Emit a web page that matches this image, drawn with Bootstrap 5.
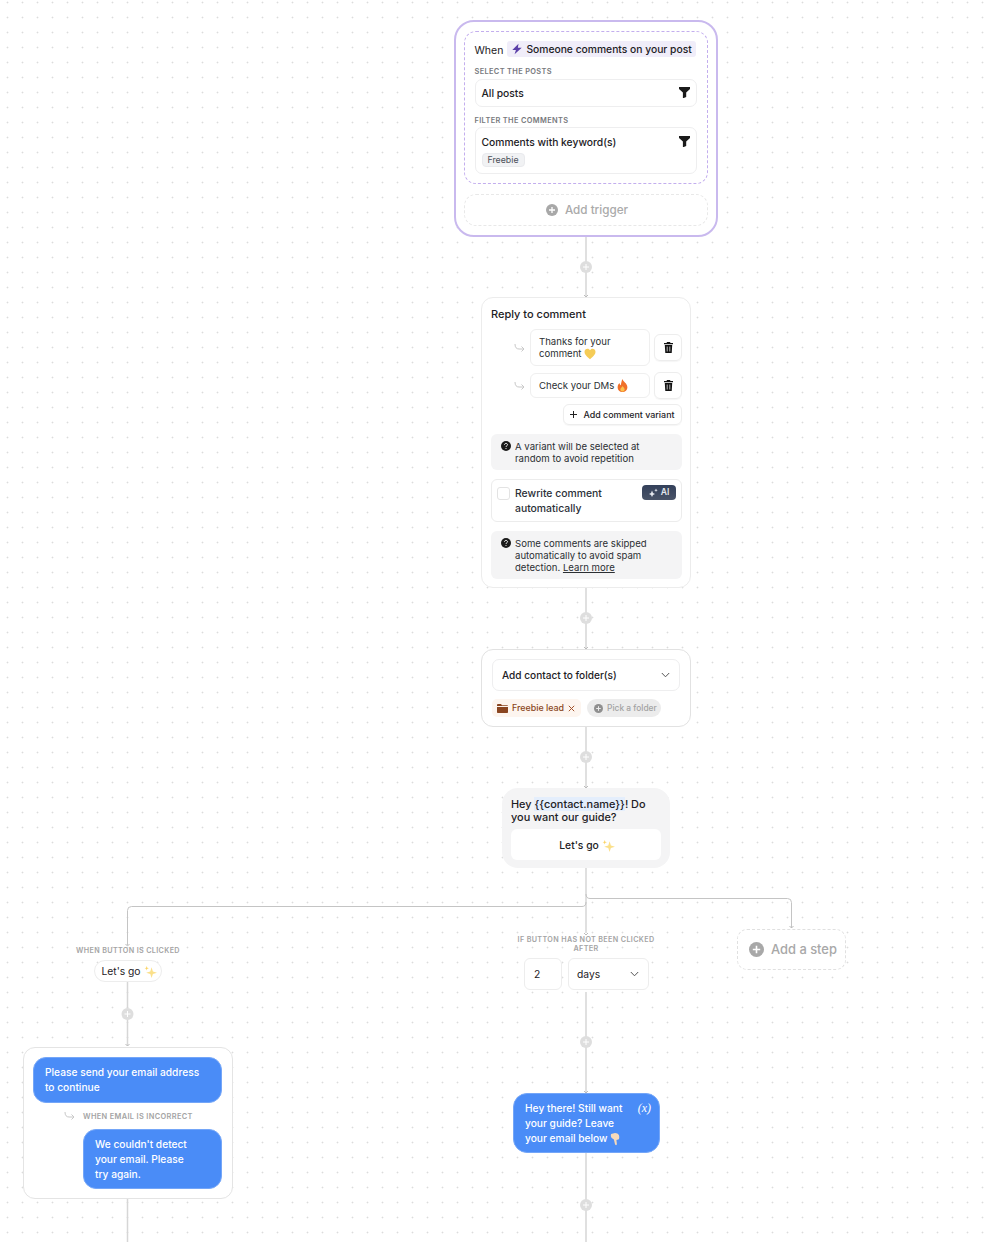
<!DOCTYPE html>
<html lang="en">
<head>
    <meta charset="UTF-8">
    <meta name="viewport" content="width=device-width, initial-scale=1">
    <title>Automation flow</title>
    <link href="https://cdn.jsdelivr.net/npm/bootstrap@5.3.2/dist/css/bootstrap.min.css" rel="stylesheet">
    <script defer src="https://cdn.jsdelivr.net/npm/bootstrap@5.3.2/dist/js/bootstrap.bundle.min.js"></script>
    <style>
        html, body { margin: 0; height: 100%; overflow: hidden; background: #fff; }
        body { font-family: Inter, "Liberation Sans", sans-serif; color: #1d2125; font-size: 10.5px; line-height: 12px; }
        svg { display: block; flex: none; }
        .inline-emoji { display: inline-block; vertical-align: middle; margin: -3px 0; }
        .flow-canvas {
            position: relative; width: 986px; height: 1242px; overflow: hidden;
            background-image: radial-gradient(circle at 7.5px 2.5px, #dcdcdc 0, #dcdcdc .8px, transparent 1.1px);
            background-size: 15px 15px;
        }
        .flow-lines { position: absolute; left: 0; top: 0; }
        .node { position: absolute; background: #fff; }

        .node-trigger { left: 454px; top: 20px; width: 264px; height: 217px; border: 2px solid #c9b9ee; border-radius: 20px; padding: 9px 8px; }
        .when-box { height: 153px; border: 1.5px dashed #c3aeee; border-radius: 12px; padding: 9px 10.500px 0 9.500px; }
        .when-text { font-size: 10.5px; padding-top: 3px; }
        .when-event { background: #f0edf9; border-radius: 3px; padding: 0 4px 1px; height: 16px; font-size: 10.3px; font-weight: 500; margin-left: 4px; gap: 3px; }
        .mini-label { font-size: 7.4px; font-weight: 600; letter-spacing: .35px; color: #77797d; line-height: 9px; }
        .label-posts { margin-top: 10px; }
        .label-comments { margin-top: 9px; }
        .select-box { border: 1px solid #eeeeef; border-radius: 7px; background: #fff; }
        .posts-box { height: 28px; padding: 0 6px; margin-top: 3px; }
        .comments-box { height: 47px; padding: 8px 6px 0; margin-top: 2px; }
        .box-text { font-size: 10.3px; font-weight: 500; }
        .funnel-up { margin-bottom: 2px; }
        .tag-grey { display: inline-block; background: #f1f2f4; border: 1px solid #e9eaed; border-radius: 4px; color: #4b5058; font-size: 8.8px; line-height: 12px; padding: 0 5px; margin-top: 5px; }
        .add-trigger { height: 32px; margin-top: 10px; border: 1.5px dashed #e8e8e8; border-radius: 12px; color: #aaa; font-size: 11.7px; font-weight: 500; gap: 7px; padding-left: 2px; }

        .node-reply { left: 481px; top: 297px; width: 210px; height: 291px; border: 1px solid #ececec; border-radius: 12px; padding: 10px 8px 0 9px; }
        .reply-title { font-size: 11px; font-weight: 500; line-height: 13px; margin-bottom: 8px; }
        .variant-row { padding-left: 23px; }
        .variant-row + .variant-row { margin-top: 6px; }
        .variant-box { width: 120px; border: 1px solid #efefef; border-radius: 6px; padding: 6px 8px 5px; font-size: 9.6px; line-height: 12px; color: #2b2f33; margin-left: 5px; }
        .variant-short { padding: 5.500px 8px; gap: 3px; }
        .trash-btn { width: 28px; height: 27px; border: 1px solid #ededed; border-radius: 6px; margin-left: 4px; box-shadow: 0 1px 1px #0000000a; }
        .add-variant { width: 119px; height: 21px; border: 1px solid #ededed; border-radius: 6px; font-size: 8.9px; font-weight: 500; gap: 6px; margin-top: 5px; box-shadow: 0 1px 1px #0000000a; }
        .info-box { background: #f4f4f5; border-radius: 6px; padding: 7px 8px 0 10px; font-size: 9.6px; line-height: 12px; color: #2b2f33; gap: 4px; }
        .info-a { height: 36px; margin-top: 9px; }
        .info-b { height: 48px; margin-top: 9px; }
        .info-box a { color: inherit; }
        .rewrite-box { height: 43px; margin-top: 9px; border: 1px solid #ececec; border-radius: 6px; padding: 6px 5px 0 5px; font-size: 10.4px; font-weight: 500; line-height: 15px; color: #2b3038; }
        .check-fake { width: 13px; height: 13px; border: 1px solid #e3e3e3; border-radius: 3px; margin: 1px 5px 0 0; flex: none; }
        .ai-badge { flex: none; width: 34px; height: 15px; background: linear-gradient(#33405a, #4a5468); color: #e6e8ee; font-size: 8.6px; font-weight: 600; border-radius: 4px; gap: 3px; margin-left: auto; margin-top: -1px; }

        .node-folder { left: 481px; top: 649px; width: 210px; height: 78px; border: 1px solid #e2e2e2; border-radius: 12px; padding: 9px 10px; }
        .folder-select { height: 32px; padding: 0 9px; }
        .folder-select .box-text { font-size: 10.1px; }
        .folder-tag { background: #fdf5ef; color: #8a4520; height: 18px; border-radius: 5px; padding: 0 6px 0 5px; font-size: 8.9px; font-weight: 500; gap: 4px; }
        .folder-pick { background: #ececec; color: #a2a2a2; height: 18px; border-radius: 9px; padding: 0 4px 0 7px; font-size: 8.4px; font-weight: 500; gap: 4px; margin-left: 6px; }

        .node-question { left: 502px; top: 788px; width: 168px; height: 80px; background: #f4f4f5; border-radius: 16px; padding: 10px 9px 0; font-size: 10.9px; line-height: 13px; font-weight: 500; }
        .var-mark { background: #e4eefc; }
        .question-btn { height: 31px; margin-top: 5px; background: #fff; border-radius: 6px; gap: 3px; font-size: 10.3px; padding: 1px 0 0 2px; }

        .node-pill { left: 94px; top: 960px; width: 68px; height: 22px; border: 1px solid #ededed; border-radius: 11px; font-size: 10.3px; gap: 3px; padding-left: 2px; }
        .caption { position: absolute; text-align: center; font-size: 7.2px; line-height: 9px; font-weight: 600; letter-spacing: .35px; color: #a4a4a4; }
        .cap-left { left: 48px; top: 946px; width: 160px; }
        .cap-right { left: 506px; top: 935px; width: 160px; }
        .node-num { left: 524px; top: 958px; width: 38px; height: 32px; border: 1px solid #ededed; border-radius: 6px; padding-left: 9px; font-size: 10.3px; }
        .node-days { left: 568px; top: 958px; width: 81px; height: 32px; border: 1px solid #ededed; border-radius: 6px; padding: 0 9px 0 8px; font-size: 10.3px; }
        .node-addstep { left: 737px; top: 929px; width: 109px; height: 41px; border: 1px dashed #e0e0e0; border-radius: 10px; color: #a8a8a8; font-size: 12.9px; font-weight: 500; gap: 7px; padding-left: 11px; }

        .node-email { left: 23px; top: 1047px; width: 210px; height: 152px; border: 1px solid #e4e4e4; border-radius: 12px; padding: 9px 10px 0 9px; }
        .blue-bubble { background: #4a8cf7; color: #fff; border: 1px solid #74a6f8; font-size: 10.2px; font-weight: 500; line-height: 15px; }
        .bubble-one { height: 46px; border-radius: 13px; padding: 7px 11px; }
        .bubble-two { width: 139px; height: 60px; border-radius: 13px; padding: 7px 28px 7px 11px; margin-left: auto; }
        .incorrect-row { height: 26px; padding-left: 31px; gap: 8px; }
        .incorrect-row .mini-label { color: #a4a4a4; }
        .node-still { left: 513px; top: 1093px; width: 147px; height: 60px; border-radius: 14px; padding: 7px 25px 7px 11px; background: #4a8cf7; }
        .var-x { position: absolute; right: 8px; top: 7px; font-family: "Liberation Serif", serif; font-style: italic; font-size: 12px; font-weight: 400; }
    </style>
</head>
<body>
<div class="flow-canvas">
    <!-- линии между шагами -->
    <svg class="flow-lines" width="986" height="1242" fill="none" stroke="#d6d6d6" stroke-width="1">
        <g stroke-width="1.5">
            <path d="M586 237V297M586 588V649M586 727V788M586 868V933M586 992V1093M586 1153V1242"/>
            <path d="M127.500 982V1046M127.500 1199V1242"/>
        </g>
        <path d="M586 902q0 4.500 -4 4.500H131.500q-4 0 -4 4V945" stroke="#c4c4c4"/>
        <path d="M586 894q0 4.500 4 4.500H787.500q4 0 4 4V928" stroke="#c4c4c4"/>
        <g stroke="#bcbcbc">
            <path d="M584 295l2 2 2-2M584 647l2 2 2-2M584 786l2 2 2-2M584 933l2 2 2-2M584 1091l2 2 2-2M125.500 944l2 2 2-2M125.500 1044l2 2 2-2M789.500 926l2 2 2-2"/>
        </g>
        <g>
            <circle cx="586" cy="267" r="6" fill="#dedede" stroke="none"/><path d="M586 264v6M583 267h6" stroke="#fff"/>
            <circle cx="586" cy="618" r="6" fill="#dedede" stroke="none"/><path d="M586 615v6M583 618h6" stroke="#fff"/>
            <circle cx="586" cy="757" r="6" fill="#dedede" stroke="none"/><path d="M586 754v6M583 757h6" stroke="#fff"/>
            <circle cx="586" cy="1042" r="6" fill="#dedede" stroke="none"/><path d="M586 1039v6M583 1042h6" stroke="#fff"/>
            <circle cx="586" cy="1205" r="6" fill="#dedede" stroke="none"/><path d="M586 1202v6M583 1205h6" stroke="#fff"/>
            <circle cx="127.500" cy="1014" r="6" fill="#dedede" stroke="none"/><path d="M127.500 1011v6M124.500 1014h6" stroke="#fff"/>
        </g>
    </svg>

    <!-- Триггер -->
    <div class="node node-trigger">
        <div class="when-box">
            <div class="d-flex align-items-center">
                <span class="when-text">When</span>
                <span class="when-event d-flex align-items-center">
                    <svg width="12" height="12" viewBox="0 0 12 12"><path d="M7.500 .8 1.300 7h3.600L3.600 11.200 10.700 4.800H6.900z" fill="#5b3fa8"/></svg>
                    Someone comments on your post
                </span>
            </div>
            <div class="mini-label label-posts">SELECT THE POSTS</div>
            <div class="select-box posts-box d-flex align-items-center justify-content-between">
                <span class="box-text">All posts</span>
                <svg class="funnel-up" width="11" height="11" viewBox="0 0 11 11"><path d="M0 0h11v2L7.200 5.500V10L4.800 11H3.900V5.500L0 2z" fill="#1b1b1b"/></svg>
            </div>
            <div class="mini-label label-comments">FILTER THE COMMENTS</div>
            <div class="select-box comments-box">
                <div class="d-flex justify-content-between">
                    <span class="box-text">Comments with keyword(s)</span>
                    <svg width="11" height="11" viewBox="0 0 11 11"><path d="M0 0h11v2L7.200 5.500V10L4.800 11H3.900V5.500L0 2z" fill="#1b1b1b"/></svg>
                </div>
                <span class="tag-grey">Freebie</span>
            </div>
        </div>
        <div class="add-trigger d-flex align-items-center justify-content-center">
            <svg width="12" height="12" viewBox="0 0 12 12"><circle cx="6" cy="6" r="6" fill="#a8a8a8"/><path d="M6 3v6M3 6h6" stroke="#fff" stroke-width="1.300"/></svg>
            Add trigger
        </div>
    </div>

    <!-- Ответ на комментарий -->
    <div class="node node-reply">
        <div class="reply-title">Reply to comment</div>
        <div class="variant-row d-flex align-items-center">
            <svg width="11" height="10" viewBox="0 0 11 10" fill="none" stroke="#c8c8c8" stroke-width="1"><path d="M1 1c0 3.500 1.500 5 4 5h5M7.500 3.500 10 6 7.500 8.500"/></svg>
            <div class="variant-box">Thanks for your comment
                <svg class="inline-emoji" width="12" height="12" viewBox="0 0 12 12"><path d="M6 11.300C2 8 .5 6 .5 3.800 .5 2 2 .8 3.500 .8 4.600 .8 5.500 1.400 6 2.300 6.500 1.400 7.400 .8 8.500 .8 10 .8 11.500 2 11.500 3.800 11.500 6 10 8 6 11.300z" fill="#f5cc57"/></svg>
            </div>
            <div class="trash-btn d-flex align-items-center justify-content-center">
                <svg width="9" height="11" viewBox="0 0 9 11"><path d="M3 0h3l.5 1H9v1.300H0V1h2.500zM.8 3h7.400l-.5 8H1.300z" fill="#111"/><path d="M3.200 4.500v5M5.800 4.500v5" stroke="#fff" stroke-width=".7"/></svg>
            </div>
        </div>
        <div class="variant-row d-flex align-items-center">
            <svg width="11" height="10" viewBox="0 0 11 10" fill="none" stroke="#c8c8c8" stroke-width="1"><path d="M1 1c0 3.500 1.500 5 4 5h5M7.500 3.500 10 6 7.500 8.500"/></svg>
            <div class="variant-box variant-short d-flex align-items-center">Check your DMs
                <svg class="inline-emoji" width="11" height="13" viewBox="0 0 10 12"><path d="M5 0c.5 2.500 4.500 4 4.500 7.500C9.500 10 7.500 12 5 12S.5 10 .5 7.500C.5 5.800 1.500 4.500 2.300 3.800c0 1.200.5 1.800 1.100 2C3.800 4 4 2 5 0z" fill="#f0702a"/><path d="M5 6.500c.5 1 2 1.800 2 3.200C7 10.900 6 11.600 5 11.600S3 10.900 3 9.700c0-1.300 1.500-2 2-3.200z" fill="#fbc14d"/></svg>
            </div>
            <div class="trash-btn d-flex align-items-center justify-content-center">
                <svg width="9" height="11" viewBox="0 0 9 11"><path d="M3 0h3l.5 1H9v1.300H0V1h2.500zM.8 3h7.400l-.5 8H1.300z" fill="#111"/><path d="M3.200 4.500v5M5.800 4.500v5" stroke="#fff" stroke-width=".7"/></svg>
            </div>
        </div>
        <div class="d-flex justify-content-end">
            <div class="add-variant d-flex align-items-center justify-content-center">
                <svg width="7" height="7" viewBox="0 0 7 7"><path d="M3.500 0v7M0 3.500h7" stroke="#222" stroke-width="1"/></svg>
                Add comment variant
            </div>
        </div>
        <div class="info-box info-a d-flex">
            <svg width="10" height="10" viewBox="0 0 10 10"><circle cx="5" cy="5" r="5" fill="#1b1b1b"/><path d="M3.500 3.800C3.500 2.900 4.200 2.400 5 2.400s1.500.5 1.500 1.300C6.500 4.800 5 4.800 5 5.900" stroke="#fff" fill="none"/><circle cx="5" cy="7.500" r=".6" fill="#fff"/></svg>
            <span>A variant will be selected at random to avoid repetition</span>
        </div>
        <div class="rewrite-box d-flex">
            <div class="check-fake"></div>
            <span>Rewrite comment automatically</span>
            <div class="ai-badge d-flex align-items-center justify-content-center">
                <svg width="9" height="9" viewBox="0 0 9 9"><path d="M3 2.500 4 5l2 1-2 1-1 2-1-2-2-1 2-1zM7 .5l.5 1.200 1.200.5-1.200.5L7 4l-.5-1.300-1.200-.5 1.200-.5z" fill="#e6e8ee"/></svg>
                AI
            </div>
        </div>
        <div class="info-box info-b d-flex">
            <svg width="10" height="10" viewBox="0 0 10 10"><circle cx="5" cy="5" r="5" fill="#1b1b1b"/><path d="M3.500 3.800C3.500 2.900 4.200 2.400 5 2.400s1.500.5 1.500 1.300C6.500 4.800 5 4.800 5 5.900" stroke="#fff" fill="none"/><circle cx="5" cy="7.500" r=".6" fill="#fff"/></svg>
            <div>
                <div>Some comments are skipped automatically to avoid spam</div>
                <div>detection. <a href="#">Learn more</a></div>
            </div>
        </div>
    </div>

    <!-- Папка -->
    <div class="node node-folder">
        <div class="select-box folder-select d-flex align-items-center justify-content-between">
            <span class="box-text">Add contact to folder(s)</span>
            <svg width="9" height="6" viewBox="0 0 9 6" fill="none" stroke="#555" stroke-width="1"><path d="M.8 1 4.500 4.800 8.200 1"/></svg>
        </div>
        <div class="d-flex align-items-center mt-2">
            <span class="folder-tag d-flex align-items-center">
                <svg width="11" height="9" viewBox="0 0 11 9"><path d="M0 1c0-.5.5-1 1-1h3l1 1.200h5c.5 0 1 .4 1 .9H0z" fill="#8a4520"/><path d="M0 3h11v5c0 .6-.4 1-1 1H1c-.6 0-1-.4-1-1z" fill="#8a4520"/></svg>
                Freebie lead
                <svg width="7" height="7" viewBox="0 0 7 7"><path d="M.8.800l5.400 5.400M6.200.800.800 6.200" stroke="#a3522a" stroke-width="1"/></svg>
            </span>
            <span class="folder-pick d-flex align-items-center">
                <svg width="9" height="9" viewBox="0 0 9 9"><circle cx="4.500" cy="4.500" r="4.500" fill="#8f8f8f"/><path d="M4.500 2.200v4.600M2.200 4.500h4.600" stroke="#ececec"/></svg>
                Pick a folder
            </span>
        </div>
    </div>

    <!-- Сообщение -->
    <div class="node node-question">
        <div>Hey <span class="var-mark">{{contact.name}}</span>! Do</div>
        <div>you want our guide?</div>
        <div class="question-btn d-flex align-items-center justify-content-center">Let's go
            <svg width="13" height="13" viewBox="0 0 12 12"><path d="M7 2 8.200 6 12 7.200 8.200 8.400 7 12 5.800 8.400 2 7.200 5.800 6z" fill="#fbe08a"/><path d="M2.500 1 3 2.500 4.500 3 3 3.500 2.500 5 2 3.500.5 3 2 2.500z" fill="#fbd25e"/></svg>
        </div>
    </div>

    <!-- Ветка слева -->
    <div class="caption cap-left">WHEN BUTTON IS CLICKED</div>
    <div class="node node-pill d-flex align-items-center justify-content-center">Let's go
        <svg width="13" height="13" viewBox="0 0 12 12"><path d="M7 2 8.200 6 12 7.200 8.200 8.400 7 12 5.800 8.400 2 7.200 5.800 6z" fill="#fbe08a"/><path d="M2.500 1 3 2.500 4.500 3 3 3.500 2.500 5 2 3.500.5 3 2 2.500z" fill="#fbd25e"/></svg>
    </div>

    <div class="node node-email">
        <div class="blue-bubble bubble-one">Please send your email address to continue</div>
        <div class="incorrect-row d-flex align-items-center">
            <svg width="11" height="10" viewBox="0 0 11 10" fill="none" stroke="#c8c8c8" stroke-width="1"><path d="M1 1c0 3.500 1.500 5 4 5h5M7.500 3.500 10 6 7.500 8.500"/></svg>
            <span class="mini-label">WHEN EMAIL IS INCORRECT</span>
        </div>
        <div class="blue-bubble bubble-two">We couldn't detect your email. Please try again.</div>
    </div>

    <!-- Ветка по центру -->
    <div class="caption cap-right">IF BUTTON HAS NOT BEEN CLICKED AFTER</div>
    <div class="node node-num d-flex align-items-center">2</div>
    <div class="node node-days d-flex align-items-center justify-content-between">days
        <svg width="9" height="6" viewBox="0 0 9 6" fill="none" stroke="#555" stroke-width="1"><path d="M.8 1 4.500 4.800 8.200 1"/></svg>
    </div>
    <div class="node blue-bubble node-still">Hey there! Still want your guide? Leave your email below
        <svg class="inline-emoji" width="10" height="14" viewBox="0 0 9 12"><path d="M1 1.500 4.500.5c1.500 0 3 .7 3.500 2 .4 1.200.5 3 0 3.800L5.800 7l.4 3.800c0 1-1.500 1-1.700 0L3.500 6.500 1.500 5C.7 4 .5 2.500 1 1.500z" fill="#f6d9bb"/></svg>
        <span class="var-x">(x)</span>
    </div>

    <!-- Ветка справа -->
    <div class="node node-addstep d-flex align-items-center">
        <svg width="15" height="15" viewBox="0 0 15 15"><circle cx="7.500" cy="7.500" r="7.500" fill="#a8a8a8"/><path d="M7.500 3.800v7.400M3.800 7.500h7.400" stroke="#fff" stroke-width="1.600"/></svg>
        Add a step
    </div>
</div>
</body>
</html>
